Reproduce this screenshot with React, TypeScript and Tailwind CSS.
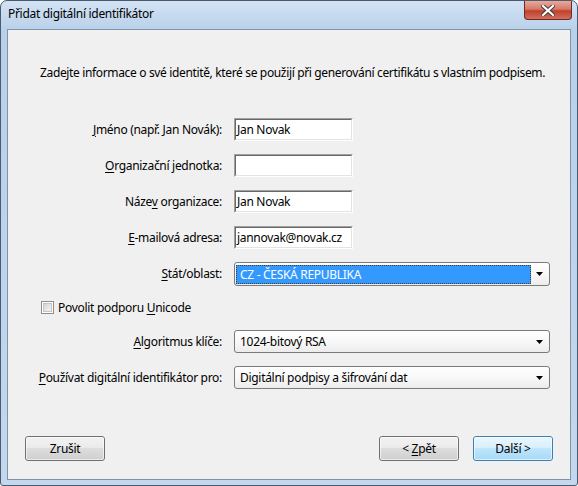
import React from "react";

const Acc = ({ children }: { children: React.ReactNode }) => (
  <span className="underline underline-offset-2">{children}</span>
);

function TextBox({ value }: { value: string }) {
  return (
    <div className="w-[119px] h-[23px] border border-t-[#a0a0a0] border-l-[#a0a0a0] border-b-white border-r-white">
      <div className="h-full border border-t-[#696969] border-l-[#696969] border-b-[#e3e3e3] border-r-[#e3e3e3] bg-white pl-[1px] leading-[19px] text-black">
        {value}
      </div>
    </div>
  );
}

function Arrow() {
  return (
    <svg width="7" height="4" viewBox="0 0 7 4" className="shrink-0">
      <path d="M0 0 H7 L3.5 4 Z" fill="#000" />
    </svg>
  );
}

function Select({ value, focused = false, h = "h-[23px]" }: { value: string; focused?: boolean; h?: string }) {
  return (
    <div
      className={`w-[316px] ${h} rounded-[3px] border border-[#7a7a7a] bg-gradient-to-b from-white via-[#f8f8f8] to-[#ececec] flex items-center pr-[2px]`}
    >
      {focused ? (
        <div className="ml-[1px] h-[19px] w-[295px] border border-dotted border-[#4b3a2a] bg-[#3399ff] text-white pl-[3px] leading-[17px]">
          {value}
        </div>
      ) : (
        <div className="ml-[1px] w-[295px] pl-[4px] text-black">{value}</div>
      )}
      <div className="flex-1 flex justify-center">
        <Arrow />
      </div>
    </div>
  );
}

function Row({ label, children, mt }: { label: React.ReactNode; children: React.ReactNode; mt: string }) {
  return (
    <div className={`flex items-center ${mt}`}>
      <div className="w-[214px] text-right whitespace-nowrap">{label}</div>
      <div className="ml-[12px]">{children}</div>
    </div>
  );
}

function Button({ children, primary = false, className = "" }: { children: React.ReactNode; primary?: boolean; className?: string }) {
  return (
    <div
      className={`w-[80px] h-[25px] rounded-[3px] border flex items-center justify-center text-black ${
        primary
          ? "border-[#3c7fb1] bg-[linear-gradient(to_bottom,#eaf6fd_0%,#d9f0fc_45%,#bee6fd_50%,#a7d9f5_100%)]"
          : "border-[#707070] bg-[linear-gradient(to_bottom,#f2f2f2_0%,#ebebeb_45%,#dddddd_50%,#cfcfcf_100%)]"
      } ${className}`}
    >
      <div className="w-full h-full rounded-[2px] border border-white/60 flex items-center justify-center whitespace-pre">{children}</div>
    </div>
  );
}

export default function App() {
  return (
    <div className="w-[578px] h-[486px] rounded-t-[7px] rounded-b-[3px] border border-[#4a5b70] bg-[linear-gradient(to_bottom,#d3e3f4_0px,#b8d0ea_30px,#c3d8ee_100%)] flex flex-col font-['Noto_Sans',sans-serif] text-[12px] tracking-[-0.3px] text-black overflow-hidden">
      <div className="h-[28px] flex items-start justify-between shrink-0">
        <div className="pl-[7px] pt-[5px] leading-[16px] text-black">Přidat digitální identifikátor</div>
        <div className="mr-[5px] w-[48px] h-[19px] rounded-b-[4px] border border-t-0 border-[#6b2a22] bg-[linear-gradient(to_bottom,#e9a99c_0%,#d57a69_45%,#c1402b_55%,#d0705e_100%)] flex items-center justify-center">
          <svg width="14" height="11" viewBox="0 0 14 11">
            <path d="M2 1 L12 10 M12 1 L2 10" stroke="#3b3b3b" strokeWidth="4" strokeLinecap="square" />
            <path d="M2 1 L12 10 M12 1 L2 10" stroke="#ffffff" strokeWidth="2.2" strokeLinecap="square" />
          </svg>
        </div>
      </div>
      <div className="mx-[6px] h-[451px] border border-[#8193a9] bg-[#f0f0f0] shrink-0 flex flex-col">
        <div className="pl-[32px] pt-[35px] leading-[15px] whitespace-nowrap tracking-[-0.35px]">
          Zadejte informace o své identitě, které se použijí při generování certifikátu s vlastním podpisem.
        </div>

        <Row mt="mt-[38px]" label={<><Acc>J</Acc>méno (např. Jan Novák):</>}>
          <TextBox value="Jan Novak" />
        </Row>
        <Row mt="mt-[13px]" label={<><Acc>O</Acc>rganizační jednotka:</>}>
          <TextBox value="" />
        </Row>
        <Row mt="mt-[13px]" label={<>Náze<Acc>v</Acc> organizace:</>}>
          <TextBox value="Jan Novak" />
        </Row>
        <Row mt="mt-[13px]" label={<><Acc>E</Acc>-mailová adresa:</>}>
          <TextBox value="jannovak@novak.cz" />
        </Row>
        <Row mt="mt-[13px]" label={<><Acc>S</Acc>tát/oblast:</>}>
          <Select value="CZ - ČESKÁ REPUBLIKA" focused h="h-[24px]" />
        </Row>

        <div className="mt-[15px] pl-[33px] flex items-center h-[13px]">
          <div className="w-[13px] h-[13px] border border-[#8e8f8f] bg-white p-[1px]">
            <div className="w-full h-full border border-[#c5c5c5] bg-gradient-to-br from-[#d4d4d4] to-[#f6f6f6]" />
          </div>
          <span className="ml-[4px] leading-[13px]">
            Povolit podporu <Acc>U</Acc>nicode
          </span>
        </div>

        <Row mt="mt-[16px]" label={<><Acc>A</Acc>lgoritmus klíče:</>}>
          <Select value="1024-bitový RSA" />
        </Row>
        <Row mt="mt-[13px]" label={<><Acc>P</Acc>oužívat digitální identifikátor pro:</>}>
          <Select value="Digitální podpisy a šifrování dat" />
        </Row>

        <div className="mt-auto mb-[18px] flex items-center px-[17px]">
          <Button>Zrušit</Button>
          <div className="flex-1" />
          <Button>
            {"< "}
            <Acc>Z</Acc>
            {"pět"}
          </Button>
          <Button primary className="ml-[14px]">
            {"Další >"}
          </Button>
        </div>
      </div>
    </div>
  );
}
